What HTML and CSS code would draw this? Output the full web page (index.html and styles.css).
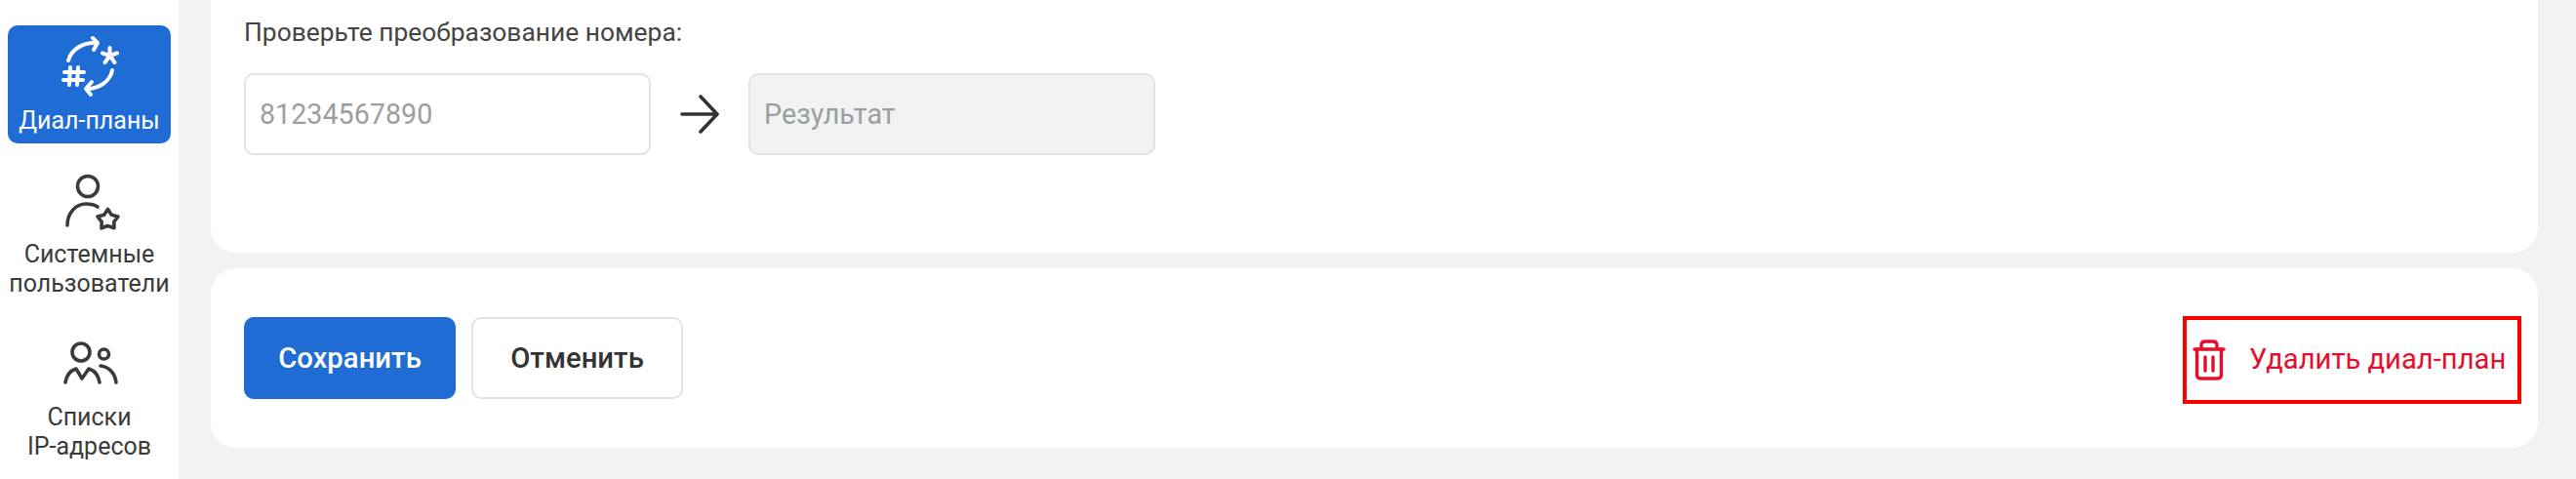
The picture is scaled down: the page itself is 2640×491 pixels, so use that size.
FILE: index.html
```html
<!DOCTYPE html>
<html lang="ru">
<head>
<meta charset="utf-8">
<title>Диал-планы</title>
<link rel="stylesheet" href="styles.css">
</head>
<body>
<div class="app">
  <nav class="sidebar">
    <a class="nav-item active">
      <svg class="nav-icon" viewBox="0 0 64 64" fill="none" stroke="currentColor" stroke-width="4" stroke-linecap="round" stroke-linejoin="round">
        <path d="M10 26C13 15 25 7 38 8"/>
        <path d="M35 3L40 8L36 15"/>
        <path d="M55 36C53 47 42 55 29 55"/>
        <path d="M34 48L28 55L33 61"/>
        <path d="M52.500 13V21M52.500 21L60 18.500M52.500 21L57.500 28M52.500 21L47.500 28M52.500 21L45 18.500"/>
        <path d="M12 33L11 51M20 33L19 51M6 38H26M5 46H25"/>
      </svg>
      <span class="nav-label">Диал-планы</span>
    </a>
    <a class="nav-item">
      <svg class="nav-icon" viewBox="0 0 64 64" fill="none" stroke="currentColor" stroke-width="3.600" stroke-linecap="round" stroke-linejoin="round">
        <circle cx="30" cy="18" r="10.500"/>
        <path d="M9 58C9 45 18 36 28 36C33 36 37 37 40 39"/>
        <path d="M50.500 41.500L54.300 47.300L61 49L56.800 54.300L57 60.800L50.500 58.500L44 60.800L44.200 54.300L40 49L46.700 47.300Z"/>
      </svg>
      <span class="nav-label">Системные<br>пользователи</span>
    </a>
    <a class="nav-item">
      <svg class="nav-icon" viewBox="0 0 64 64" fill="none" stroke="currentColor" stroke-width="3.600" stroke-linecap="round" stroke-linejoin="round">
        <circle cx="23" cy="21" r="9"/>
        <circle cx="46.500" cy="23" r="5"/>
        <path d="M7 52C8 45 12 40 18 38L24 48L31 38C37 40 41 45 42 52"/>
        <path d="M43 35C52 36 58 43 59 52"/>
      </svg>
      <span class="nav-label">Списки<br>IP-адресов</span>
    </a>
  </nav>
  <main class="content">
    <section class="card card-test">
      <p class="test-title">Проверьте преобразование номера:</p>
      <div class="test-row">
        <input class="field field-source" type="text" placeholder="81234567890">
        <svg class="arrow" viewBox="0 0 40 40" fill="none" stroke="#333" stroke-width="3.600" stroke-linecap="round" stroke-linejoin="round">
          <path d="M2 20H38M21 2L38 20L21 38"/>
        </svg>
        <input class="field field-result" type="text" placeholder="Результат" disabled>
      </div>
    </section>
    <section class="card card-actions">
      <div class="actions-left">
        <button class="btn btn-primary" type="button">Сохранить</button>
        <button class="btn btn-secondary" type="button">Отменить</button>
      </div>
      <a class="delete-link">
        <svg class="trash" viewBox="0 0 34 42" fill="none" stroke="currentColor" stroke-width="3.400" stroke-linecap="round" stroke-linejoin="round">
          <path d="M2 10H32M9 10V6C9 3.500 10.500 2 13 2H21C23.500 2 25 3.500 25 6V10"/>
          <path d="M4.500 10V36C4.500 38.500 6 40 8.500 40H25.500C28 40 29.500 38.500 29.500 36V10"/>
          <path d="M13 18V32M21 18V32"/>
        </svg>
        <span class="delete-text">Удалить диал-план</span>
      </a>
    </section>
  </main>
</div>
</body>
</html>
```

FILE: styles.css
```css
* {
  box-sizing: border-box;
}

html,
body {
  margin: 0;
  height: 491px;
  overflow: hidden;
}

body {
  background: #f1f3f2;
  font-family: Roboto, "Noto Sans", sans-serif;
  color: #333;
}

.app {
  display: flex;
  height: 491px;
}

.sidebar {
  width: 183px;
  flex: none;
  background: #fff;
  padding: 26px 8px 0;
  display: flex;
  flex-direction: column;
  gap: 16px;
}

.nav-item {
  display: flex;
  flex-direction: column;
  align-items: center;
  padding: 10px 0 8px;
  border-radius: 10px;
  color: #3a3a3a;
  text-align: center;
}

.nav-item.active {
  background: #1f6dd4;
  color: #fff;
}

.nav-icon {
  width: 64px;
  height: 64px;
  flex: none;
}

.nav-label {
  margin-top: 9px;
  font-size: 25px;
  line-height: 30px;
  white-space: nowrap;
}

.content {
  flex: 1;
  min-width: 0;
  display: flex;
  flex-direction: column;
  justify-content: flex-end;
  gap: 16px;
  padding: 0 39px 32px 33px;
}

.card {
  background: #fff;
  border-radius: 26px;
  padding-left: 34px;
  flex: none;
}

.card-test {
  padding-top: 40px;
  padding-bottom: 100px;
}

.test-title {
  margin: 0 0 25px;
  font-size: 26.400px;
  line-height: 34px;
  color: #444;
}

.test-row {
  display: flex;
  align-items: center;
}

.field {
  height: 84px;
  border: 2px solid #e2e4e4;
  border-radius: 10px;
  padding: 0 14px;
  font: 400 28.700px Roboto, sans-serif;
  color: #333;
  background: #fff;
  outline: none;
}

.field::placeholder {
  color: #9c9e9e;
  opacity: 1;
}

.field-source,
.field-result {
  width: 417px;
}

.field-result {
  background: #f1f3f2;
}

.arrow {
  width: 40px;
  height: 40px;
  flex: none;
  margin: 0 30px;
}

.card-actions {
  display: flex;
  justify-content: space-between;
  align-items: flex-start;
  padding: 50px 17px 50px 34px;
  height: 184px;
}

.actions-left {
  display: flex;
  gap: 16px;
}

.btn {
  width: 217px;
  height: 84px;
  border-radius: 10px;
  font: 500 29.300px Roboto, sans-serif;
  padding: 0;
}

.btn-primary {
  background: #1f6dd4;
  border: 0;
  color: #fff;
}

.btn-secondary {
  background: #fff;
  border: 2px solid #e2e4e4;
  color: #333;
}

.delete-link {
  display: flex;
  align-items: center;
  gap: 24px;
  width: 347px;
  height: 90px;
  margin-top: -1px;
  padding: 0 0 0 6px;
  border: 4px solid #f00;
  color: #e2102e;
  font-size: 29.200px;
  white-space: nowrap;
}

.delete-text {
  margin-bottom: 2px;
}

.trash {
  width: 34px;
  height: 42px;
  flex: none;
}
```
